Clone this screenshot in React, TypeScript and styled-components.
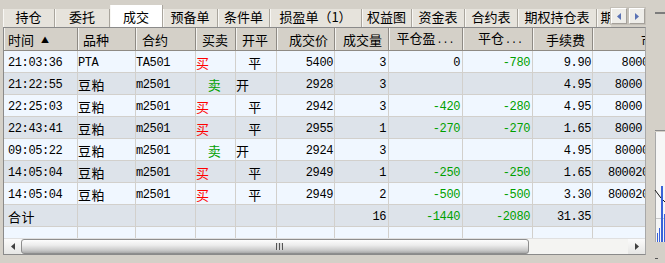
import React from "react";
import styled, { createGlobalStyle } from "styled-components";

const GlobalStyle = createGlobalStyle`
  html, body {
    margin: 0;
    padding: 0;
    background: #d4d0c8;
    overflow: hidden;
  }
  body {
    font-family: "Noto Sans CJK SC", sans-serif;
  }
`;

const COLS = "74px 58px 60px 40px 41px 58px 54px 74px 70px 60px 90px";
const HAN = /[\u4e00-\u9fff]/;
const GREEN = "#00a000";
const RED = "#ff0000";

type Align = "left" | "right" | "center";

interface ITrade {
  time: string;
  kind: string;
  code: string;
  side: "买" | "卖";
  oc: "开" | "平";
  price: string;
  qty: string;
  pnl: string;
  pnl2: string;
  fee: string;
  extra: string;
}

const trades: ITrade[] = [
  { time: "21:03:36", kind: "PTA", code: "TA501", side: "买", oc: "平", price: "5400", qty: "3", pnl: "0", pnl2: "-780", fee: "9.90", extra: "  8000" },
  { time: "21:22:55", kind: "豆粕", code: "m2501", side: "卖", oc: "开", price: "2928", qty: "3", pnl: "", pnl2: "", fee: "4.95", extra: " 8000" },
  { time: "22:25:03", kind: "豆粕", code: "m2501", side: "买", oc: "平", price: "2942", qty: "3", pnl: "-420", pnl2: "-280", fee: "4.95", extra: " 8000" },
  { time: "22:43:41", kind: "豆粕", code: "m2501", side: "买", oc: "平", price: "2955", qty: "1", pnl: "-270", pnl2: "-270", fee: "1.65", extra: " 8000" },
  { time: "09:05:22", kind: "豆粕", code: "m2501", side: "卖", oc: "开", price: "2924", qty: "3", pnl: "", pnl2: "", fee: "4.95", extra: " 80000" },
  { time: "14:05:04", kind: "豆粕", code: "m2501", side: "买", oc: "平", price: "2949", qty: "1", pnl: "-250", pnl2: "-250", fee: "1.65", extra: "800020" },
  { time: "14:05:04", kind: "豆粕", code: "m2501", side: "买", oc: "平", price: "2949", qty: "2", pnl: "-500", pnl2: "-500", fee: "3.30", extra: "800020" },
];

const tabs = [
  { label: "持仓", w: 52 },
  { label: "委托", w: 55 },
  { label: "成交", w: 53, active: true },
  { label: "预备单", w: 55 },
  { label: "条件单", w: 52 },
  { label: "损盈单（1）", w: 92 },
  { label: "权益图", w: 50 },
  { label: "资金表", w: 53 },
  { label: "合约表", w: 53 },
  { label: "期权持仓表", w: 79 },
  { label: "期", w: 21 },
];

const pnlColor = (v: string) => (v.startsWith("-") ? GREEN : v && v !== "0" ? RED : "#000");

const Arrow = ({ dir, color }: { dir: "left" | "right"; color: string }) => (
  <svg width="4" height="7" viewBox="0 0 4 7">
    <path d={dir === "left" ? "M4 0 L0 3.5 L4 7 Z" : "M0 0 L4 3.5 L0 7 Z"} fill={color} />
  </svg>
);

const SideChart = () => (
  <svg width="19" height="263" viewBox="0 0 19 263">
    <rect x="9" y="12" width="10" height="2" fill="#7c7c7c" />
    <rect x="9" y="130" width="10" height="1" fill="#8a8a8a" />
    <rect x="10" y="132" width="9" height="110" fill="#f6f6f6" />
    <rect x="9" y="132" width="1" height="110" fill="#a8a8a8" />
    <rect x="10" y="218" width="9" height="1" fill="#c8c8c8" />
    <polyline points="9,190 12,194 15,198 19,202" fill="none" stroke="#111" strokeWidth="1" />
    <rect x="11" y="233" width="1" height="9" fill="#3a62d8" />
    <rect x="13" y="228" width="1" height="14" fill="#3a62d8" />
    <rect x="15" y="186" width="2" height="56" fill="#3a62d8" />
    <rect x="18" y="214" width="1" height="28" fill="#3a62d8" />
    <rect x="9" y="258" width="3" height="1" fill="#555" />
  </svg>
);

export default function App() {
  return (
    <>
      <GlobalStyle />
      <Page>
        <Main>
          <TabBar>
            <TabStrip>
              {tabs.map((t) => (
                <Tab key={t.label} $w={t.w} $active={t.active}>
                  {t.label}
                </Tab>
              ))}
            </TabStrip>
            <TabScroll>
              <ArrowBtn>
                <Arrow dir="left" color="#5a72b4" />
              </ArrowBtn>
              <ArrowBtn>
                <Arrow dir="right" color="#5a72b4" />
              </ArrowBtn>
            </TabScroll>
          </TabBar>
          <Frame>
            <TableArea>
              <HeadRow>
                <HeadCell $pl={4}>
                  <span>
                    时间<SortMark>▲</SortMark>
                  </span>
                </HeadCell>
                <HeadCell $pl={5}>品种</HeadCell>
                <HeadCell $pl={6}>合约</HeadCell>
                <HeadCell $pl={6}>买卖</HeadCell>
                <HeadCell $pl={6}>开平</HeadCell>
                <HeadCell $align="center" $pl={6}>成交价</HeadCell>
                <HeadCell $align="center" $pl={2}>成交量</HeadCell>
                <HeadCell $align="center">
                  <span>
                    平仓盈<Dots>...</Dots>
                  </span>
                </HeadCell>
                <HeadCell $align="center" $pl={6}>
                  <span>
                    平仓<Dots>...</Dots>
                  </span>
                </HeadCell>
                <HeadCell $align="center" $pl={6}>手续费</HeadCell>
                <HeadCell $pl={48}>市</HeadCell>
              </HeadRow>
              {trades.map((r, i) => (
                <Row key={i} $alt={i % 2 === 1}>
                  <Cell $pl={4}>{r.time}</Cell>
                  <Cell $han={HAN.test(r.kind)}>{r.kind}</Cell>
                  <Cell>{r.code}</Cell>
                  <Cell $han $align={r.side === "买" ? "left" : "center"} $color={r.side === "买" ? RED : GREEN}>
                    {r.side}
                  </Cell>
                  <Cell $han $align={r.oc === "开" ? "left" : "center"}>
                    {r.oc}
                  </Cell>
                  <Cell $align="right" $pr={1}>{r.price}</Cell>
                  <Cell $align="right">{r.qty}</Cell>
                  <Cell $align="right" $color={pnlColor(r.pnl)}>{r.pnl}</Cell>
                  <Cell $align="right" $color={pnlColor(r.pnl2)}>{r.pnl2}</Cell>
                  <Cell $align="right" $pr={1}>{r.fee}</Cell>
                  <Cell $pl={15}>{r.extra}</Cell>
                </Row>
              ))}
              <Row $alt>
                <Cell $han $pl={4}>合计</Cell>
                <Cell />
                <Cell />
                <Cell />
                <Cell />
                <Cell />
                <Cell $align="right">16</Cell>
                <Cell $align="right" $color={GREEN}>-1440</Cell>
                <Cell $align="right" $color={GREEN}>-2080</Cell>
                <Cell $align="right" $pr={1}>31.35</Cell>
                <Cell />
              </Row>
              <Row>
                {Array.from({ length: 11 }).map((_, i) => (
                  <Cell key={i} />
                ))}
              </Row>
            </TableArea>
            <HScroll>
              <ScrollBtn>
                <Arrow dir="left" color="#404040" />
              </ScrollBtn>
              <Thumb>
                <Grip />
              </Thumb>
              <Track />
              <ScrollBtn $end>
                <Arrow dir="right" color="#404040" />
              </ScrollBtn>
            </HScroll>
          </Frame>
        </Main>
        <SideChart />
      </Page>
    </>
  );
}

const Page = styled.div`
  display: flex;
  width: 665px;
  height: 263px;
`;

const Main = styled.div`
  width: 643px;
  margin-left: 3px;
  display: flex;
  flex-direction: column;
`;

const TabBar = styled.div`
  display: flex;
  height: 27px;
`;

const TabStrip = styled.div`
  width: 608px;
  height: 27px;
  display: flex;
  align-items: flex-end;
  overflow: hidden;
`;

const Tab = styled.div<{ $w: number; $active?: boolean }>`
  flex: none;
  width: ${(p) => p.$w}px;
  height: ${(p) => (p.$active ? 22 : 18)}px;
  box-sizing: border-box;
  display: flex;
  align-items: flex-end;
  justify-content: center;
  padding-bottom: 4px;
  background: ${(p) => (p.$active ? "#ffffff" : "#e6e3dc")};
  border-right: 1px solid #a9a59d;
  box-shadow: inset 1px 0 #f8f7f4;
  font-size: 13px;
  line-height: 13px;
  color: #000;
  white-space: nowrap;
`;

const TabScroll = styled.div`
  display: flex;
  gap: 2px;
  margin-top: 8px;
  height: 16px;
`;

const ArrowBtn = styled.div`
  width: 16px;
  height: 16px;
  box-sizing: border-box;
  display: flex;
  align-items: center;
  justify-content: center;
  background: #eeede9;
  border: 1px solid;
  border-color: #ffffff #a4a09a #a4a09a #ffffff;
  outline: 1px solid #c4c0b8;
`;

const Frame = styled.div`
  width: 643px;
  height: 228px;
  box-sizing: border-box;
  border: 1px solid #8a8a8a;
  border-right-color: #a8a8a8;
  display: flex;
  flex-direction: column;
  background: #f0f7ff;
`;

const TableArea = styled.div`
  height: 210px;
  overflow: hidden;
`;

const HeadRow = styled.div`
  display: grid;
  grid-template-columns: ${COLS};
  height: 23px;
  box-sizing: border-box;
  border-bottom: 1px solid #8e8a84;
  background: #d4d0c8;
`;

const HeadCell = styled.div<{ $align?: Align; $pl?: number }>`
  box-sizing: border-box;
  display: flex;
  align-items: center;
  justify-content: ${(p) => (p.$align === "center" ? "center" : p.$align === "right" ? "flex-end" : "flex-start")};
  padding-left: ${(p) => p.$pl ?? 0}px;
  border-right: 1px solid #8e8a84;
  box-shadow: inset 1px 0 #f4f3f0;
  font-size: 13px;
  line-height: 13px;
  color: #000;
  white-space: nowrap;
  overflow: hidden;
`;

const SortMark = styled.span`
  font-size: 8px;
  margin-left: 7px;
  vertical-align: 2px;
`;

const Dots = styled.span`
  font-family: "Liberation Mono", monospace;
  font-size: 10px;
  margin-left: 1px;
`;

const Row = styled.div<{ $alt?: boolean }>`
  display: grid;
  grid-template-columns: ${COLS};
  height: 22px;
  box-sizing: border-box;
  border-bottom: 1px solid #d2d0cc;
  background: ${(p) => (p.$alt ? "#dde3ea" : "#f0f7ff")};
`;

const Cell = styled.div<{ $align?: Align; $pl?: number; $pr?: number; $color?: string; $han?: boolean }>`
  box-sizing: border-box;
  display: flex;
  align-items: center;
  justify-content: ${(p) => (p.$align === "center" ? "center" : p.$align === "right" ? "flex-end" : "flex-start")};
  padding: 3px ${(p) => p.$pr ?? 2}px 0 ${(p) => p.$pl ?? 0}px;
  border-right: 1px solid #d2d0cc;
  overflow: hidden;
  white-space: pre;
  color: ${(p) => p.$color ?? "#000"};
  font-family: ${(p) => (p.$han ? '"Noto Sans CJK SC", sans-serif' : '"Liberation Mono", "Noto Sans CJK SC", monospace')};
  font-size: ${(p) => (p.$han ? 13 : 12)}px;
  line-height: 14px;
  letter-spacing: ${(p) => (p.$han ? "0.5px" : "-0.4px")};
`;

const HScroll = styled.div`
  display: flex;
  height: 16px;
  background: #f4f4f2;
  border-top: 1px solid #e0e0e0;
  box-sizing: border-box;
`;

const ScrollBtn = styled.div<{ $end?: boolean }>`
  width: 17px;
  flex: none;
  display: flex;
  align-items: center;
  justify-content: center;
  background: linear-gradient(#fbfbfb, #e6e6e4);
  ${(p) => (p.$end ? "margin-left: auto;" : "")}
`;

const Thumb = styled.div`
  width: 508px;
  flex: none;
  box-sizing: border-box;
  border: 1px solid #8e8e8e;
  border-radius: 3px;
  background: linear-gradient(#fdfdfd 0%, #ececec 40%, #c8c8c8 80%, #a8a8a8 100%);
  display: flex;
  align-items: center;
  justify-content: center;
`;

const Grip = styled.div`
  width: 7px;
  height: 7px;
  margin-left: 8px;
  background: repeating-linear-gradient(90deg, #555 0 1px, #d8d8d8 1px 3px);
`;

const Track = styled.div`
  flex: 1;
`;
